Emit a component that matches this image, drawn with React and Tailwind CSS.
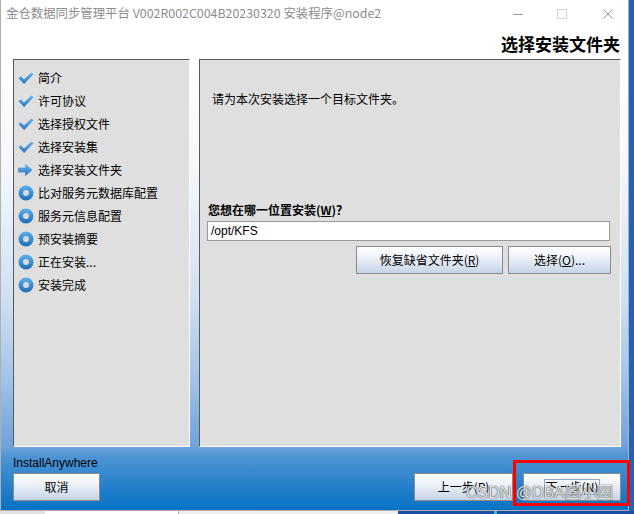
import React from 'react';

const CheckIcon = () => (
  <svg width="16" height="16" viewBox="0 0 16 16" className="shrink-0">
    <defs>
      <linearGradient id="gck" x1="0" y1="0" x2="0" y2="1">
        <stop offset="0" stopColor="#6cb6ec" />
        <stop offset="1" stopColor="#2674bd" />
      </linearGradient>
    </defs>
    <path d="M0.5 8.2 L2.8 6.3 L6 9.6 L13.4 2.4 L15.5 4.2 L6.1 14 Z" fill="url(#gck)" strokeLinejoin="round" />
  </svg>
);

const ArrowIcon = () => (
  <svg width="16" height="16" viewBox="0 0 16 16" className="shrink-0">
    <defs>
      <linearGradient id="gar" x1="0" y1="0" x2="0" y2="1">
        <stop offset="0" stopColor="#6cb6ec" />
        <stop offset="1" stopColor="#2674bd" />
      </linearGradient>
    </defs>
    <path d="M0.5 6 L7.5 6 L7.5 2.5 L14 8 L7.5 13.5 L7.5 10 L0.5 10 Z" fill="url(#gar)" stroke="url(#gar)" strokeWidth="0.8" strokeLinejoin="round" />
  </svg>
);

const CircleIcon = () => (
  <svg width="16" height="16" viewBox="0 0 16 16" className="shrink-0">
    <defs>
      <linearGradient id="gci" x1="0" y1="0" x2="0" y2="1">
        <stop offset="0" stopColor="#5eb0ea" />
        <stop offset="1" stopColor="#1f6db5" />
      </linearGradient>
    </defs>
    <circle cx="8" cy="8" r="7.5" fill="url(#gci)" />
    <circle cx="8" cy="8" r="3" fill="#d6d9de" />
  </svg>
);

const steps = [
  ['check', '简介'],
  ['check', '许可协议'],
  ['check', '选择授权文件'],
  ['check', '选择安装集'],
  ['arrow', '选择安装文件夹'],
  ['circle', '比对服务元数据库配置'],
  ['circle', '服务元信息配置'],
  ['circle', '预安装摘要'],
  ['circle', '正在安装...'],
  ['circle', '安装完成'],
];

function Btn({ children, className }) {
  return (
    <div
      className={`flex items-center justify-center h-[28px] border border-[#8a8a8a] bg-[linear-gradient(to_bottom,#ffffff_0%,#f0f4f9_35%,#c6d4e8_100%)] text-[12px] leading-none text-black ${className}`}
    >
      {children}
    </div>
  );
}

export default function App() {
  return (
    <div className="relative w-[634px] h-[514px] overflow-hidden flex flex-col bg-[#2160b6] font-['Noto_Sans_CJK_SC',sans-serif]">
      <div className="flex h-[511px]">
        <div className="w-[629px] h-full flex flex-col bg-white border-l border-r border-b border-[#b0b0b0]">
          {/* Title bar */}
          <div className="h-[27px] flex items-center">
            <span className="pl-[5px] text-[12.4px] text-[#8c8c8c] whitespace-nowrap leading-none">
              金仓数据同步管理平台 V002R002C004B20230320 安装程序@node2
            </span>
            <div className="ml-auto flex items-center pr-[15px]">
              <svg width="10" height="10" viewBox="0 0 10 10" className="mr-[34px]">
                <line x1="0" y1="5.5" x2="10" y2="5.5" stroke="#9a9a9a" strokeWidth="1" />
              </svg>
              <svg width="10" height="10" viewBox="0 0 10 10" className="mr-[36px]">
                <rect x="0.5" y="0.5" width="9" height="9" fill="none" stroke="#d2d2d2" strokeWidth="1" />
              </svg>
              <svg width="10" height="10" viewBox="0 0 10 10">
                <path d="M0.5 0.5 L9.5 9.5 M9.5 0.5 L0.5 9.5" stroke="#9a9a9a" strokeWidth="1" />
              </svg>
            </div>
          </div>
          {/* Header */}
          <div className="h-[32px] flex items-center justify-end pr-[8px]">
            <span className="text-[17px] font-bold leading-none text-black">选择安装文件夹</span>
          </div>
          {/* Body */}
          <div className="flex-1 flex flex-col bg-[linear-gradient(to_bottom,#ffffff_0%,#f3f7fc_25%,#cfe0f3_53%,#a4c5ea_70%,#6ea2da_86%,#4f94d4_88%,#2a82cc_94%,#0672c3_100%)]">
            <div className="h-[388px] flex gap-[9px] pl-[12px] pr-[7px]">
              {/* Left steps panel */}
              <div className="w-[177px] h-full bg-[#dfdfdf] border-t border-l border-[#5a5a5a] border-r-white border-b-white border-r border-b pt-[6px] pl-[4px]">
                {steps.map(([icon, label]) => (
                  <div key={label} className="h-[23px] flex items-center gap-[4px]">
                    {icon === 'check' && <CheckIcon />}
                    {icon === 'arrow' && <ArrowIcon />}
                    {icon === 'circle' && <CircleIcon />}
                    <span className="text-[12px] leading-none text-black whitespace-nowrap">{label}</span>
                  </div>
                ))}
              </div>
              {/* Right content panel */}
              <div className="w-[422px] h-full bg-[#dfdfdf] border-t border-l border-[#5a5a5a] border-r-white border-b-white border-r border-b pl-[7px] pr-[10px] pt-[31px] flex flex-col">
                <div className="ml-[5px] h-[16px] flex items-center text-[12px] leading-none text-black">
                  请为本次安装选择一个目标文件夹。
                </div>
                <div className="mt-[95px] ml-[1px] h-[16px] flex items-center text-[12px] leading-none font-bold text-black">
                  您想在哪一位置安装(<span className="underline">W</span>)？
                </div>
                <div className="mt-[3px] h-[20px] bg-white border border-[#9a9a9a] flex items-center pl-[3px] text-[12px] leading-none text-black font-['Liberation_Sans',sans-serif]">
                  /opt/KFS
                </div>
                <div className="mt-[5px] flex justify-end gap-[5px] -mr-[1px]">
                  <Btn className="w-[147px]">
                    恢复缺省文件夹(<span className="underline">R</span>)
                  </Btn>
                  <Btn className="w-[103px]">
                    选择(<span className="underline">O</span>)...
                  </Btn>
                </div>
              </div>
            </div>
            <div className="mt-[8px] h-[16px] pl-[12px] flex items-center text-[12px] leading-none text-black font-['Liberation_Sans',sans-serif]">
              InstallAnywhere
            </div>
            <div className="mt-[2px] flex pl-[12px] pr-[7px]">
              <Btn className="w-[87px]">取消</Btn>
              <Btn className="w-[99px] ml-auto">上一步(P)</Btn>
              <Btn className="w-[98px] ml-[10px]">
                <span className="border border-[#98a6c0] h-[16px] px-[1px] flex items-center">下一步(N)</span>
              </Btn>
            </div>
          </div>
        </div>
        <div className="flex-1 bg-[#2462b8]" />
      </div>
      {/* bottom sliver of background windows */}
      <div className="flex h-[3px]">
        <div className="w-[45px] bg-[#e2e2e2]" />
        <div className="w-[133px] bg-white" />
        <div className="w-[1px] bg-[#a8a8a8]" />
        <div className="w-[219px] bg-[#efefef]" />
        <div className="w-[96px] bg-[#1b4fa7]" />
        <div className="w-[3px] bg-[#2ec6c6]" />
        <div className="flex-1 bg-[#1b4fa7]" />
      </div>

      {/* watermark */}
      <div className="absolute left-[466px] top-[485px] text-[16px] leading-none text-[#e4e4e4] whitespace-nowrap font-['Liberation_Sans','Noto_Sans_CJK_SC',sans-serif] [text-shadow:0_0_1px_rgba(70,70,70,1),0_0_1px_rgba(70,70,70,1)]">
        CSDN @DBA圈小圈
      </div>
      {/* red highlight box */}
      <div className="absolute left-[513px] top-[460px] w-[117px] h-[46px] border-[3px] border-[#ff0000]" />
    </div>
  );
}
